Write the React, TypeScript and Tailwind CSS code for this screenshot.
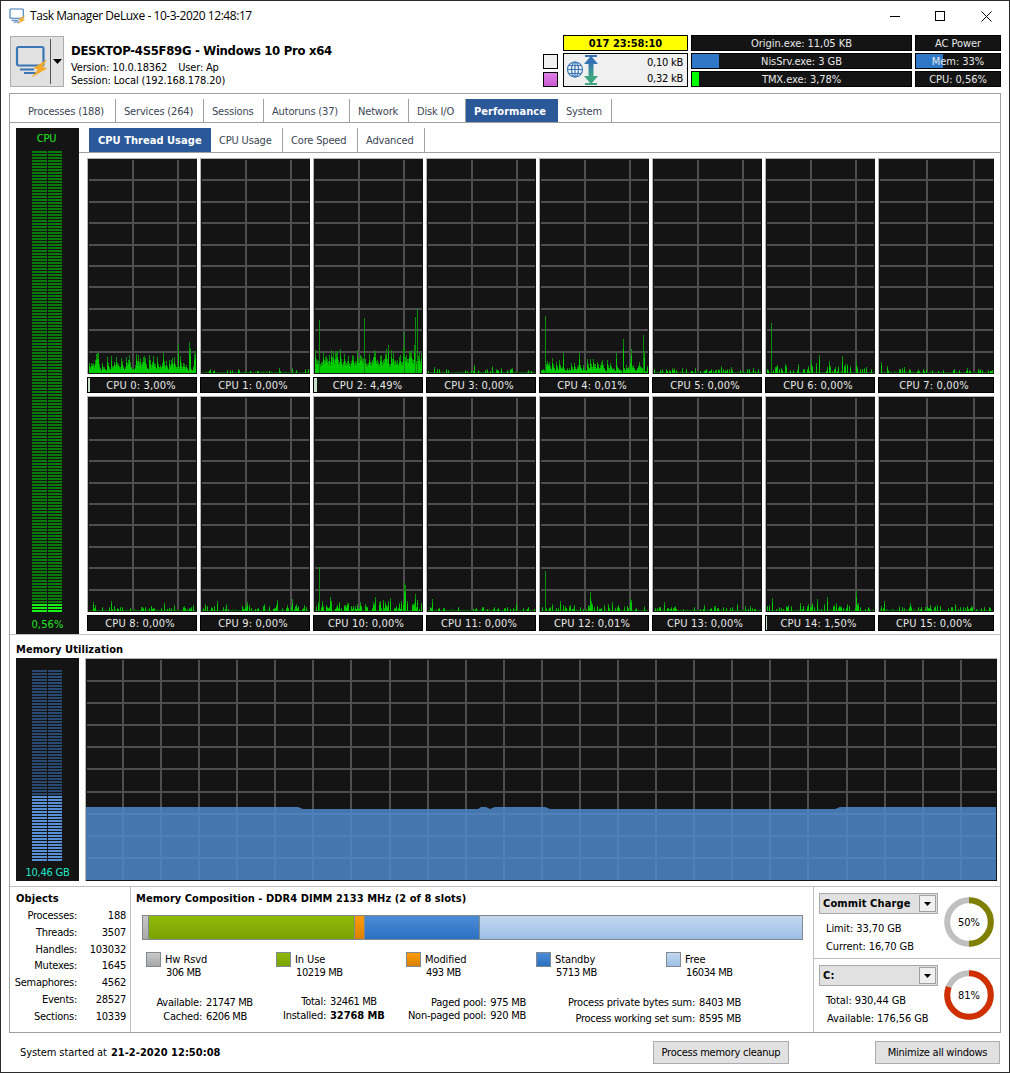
import React from 'react';

interface Tab {
  label: string;
  width: string;
  active?: boolean;
}

interface Thread {
  value: string;
  base: number;
  noise: number;
  density: number;
  spikes: [number, number][];
  marker?: string;
}

const mainTabs: Tab[] = [
  { label: 'Processes (188)', width: 'w-[106px] pl-[18px]' },
  { label: 'Services (264)', width: 'w-[88px] pl-2' },
  { label: 'Sessions', width: 'w-[60px] pl-2' },
  { label: 'Autoruns (37)', width: 'w-[86px] pl-2' },
  { label: 'Network', width: 'w-[59px] pl-2' },
  { label: 'Disk I/O', width: 'w-[57px] pl-2' },
  { label: 'Performance', width: 'w-[92px] pl-2', active: true },
  { label: 'System', width: 'w-[54px] pl-2' },
];

const subTabs: Tab[] = [
  { label: 'CPU Thread Usage', width: 'w-[122px] pl-[9px]', active: true },
  { label: 'CPU Usage', width: 'w-[72px] pl-2' },
  { label: 'Core Speed', width: 'w-[75px] pl-2' },
  { label: 'Advanced', width: 'w-[67px] pl-2' },
];

const threads: Thread[] = [
  { value: '3,00%', base: 2, noise: 17, density: 0.95, spikes: [[89, 29], [100, 31], [101, 25], [9, 20], [22, 17], [60, 18], [106, 22]], marker: 'w-[2px]' },
  { value: '0,00%', base: 0, noise: 3, density: 0.6, spikes: [[77, 5], [90, 5]] },
  { value: '4,49%', base: 8, noise: 15, density: 1, spikes: [[4, 53], [49, 55], [73, 28], [89, 40], [88, 25], [100, 56], [102, 64], [99, 28]], marker: 'w-[3px]' },
  { value: '0,00%', base: 0, noise: 4, density: 0.6, spikes: [[6, 6], [46, 8], [64, 7]] },
  { value: '0,01%', base: 1, noise: 13, density: 0.88, spikes: [[4, 57], [22, 20], [38, 20], [75, 20], [82, 34], [90, 24], [102, 38], [103, 22]] },
  { value: '0,00%', base: 0, noise: 4, density: 0.6, spikes: [[67, 7], [20, 5], [77, 6]] },
  { value: '0,00%', base: 0, noise: 9, density: 0.62, spikes: [[4, 50], [44, 13], [52, 18], [75, 17], [62, 12], [89, 12]] },
  { value: '0,00%', base: 0, noise: 4, density: 0.6, spikes: [[1, 11], [7, 7], [24, 6]] },
  { value: '0,00%', base: 0, noise: 5, density: 0.6, spikes: [[4, 9], [22, 10], [75, 8], [85, 6]] },
  { value: '0,00%', base: 0, noise: 6, density: 0.7, spikes: [[15, 10], [45, 9], [75, 11], [90, 12]] },
  { value: '0,00%', base: 0, noise: 10, density: 0.82, spikes: [[4, 44], [15, 14], [60, 14], [75, 13], [89, 28], [90, 26], [100, 17]] },
  { value: '0,00%', base: 0, noise: 3, density: 0.7, spikes: [[4, 12], [88, 8]] },
  { value: '0,01%', base: 0, noise: 6, density: 0.5, spikes: [[4, 40], [19, 10], [49, 19], [50, 10], [71, 9], [89, 13], [90, 11]] },
  { value: '0,00%', base: 0, noise: 4, density: 0.6, spikes: [[10, 9], [50, 6], [83, 7]] },
  { value: '1,50%', base: 0, noise: 8, density: 0.65, spikes: [[5, 13], [50, 12], [60, 14], [89, 20]], marker: 'w-px' },
  { value: '0,00%', base: 0, noise: 5, density: 0.6, spikes: [[4, 10], [30, 8], [75, 7]] },
];

const objects = [
  ['Processes:', '188'],
  ['Threads:', '3507'],
  ['Handles:', '103032'],
  ['Mutexes:', '1645'],
  ['Semaphores:', '4562'],
  ['Events:', '28527'],
  ['Sections:', '10339'],
];

const composition = [
  { name: 'Hw Rsvd', size: '306 MB', width: 'w-[6px]', fill: 'bg-linear-to-b from-[#c8c8c8] to-[#a8a8a8]' },
  { name: 'In Use', size: '10219 MB', width: 'w-[206px]', fill: 'bg-linear-to-b from-[#8eba08] to-[#7ba205]' },
  { name: 'Modified', size: '493 MB', width: 'w-[10px]', fill: 'bg-linear-to-b from-[#ff9c0c] to-[#d98200]' },
  { name: 'Standby', size: '5713 MB', width: 'w-[115px]', fill: 'bg-linear-to-b from-[#4c8cd6] to-[#2a70c2]' },
  { name: 'Free', size: '16034 MB', width: 'w-[322px]', fill: 'bg-linear-to-b from-[#c3d8f0] to-[#9dbfe6]' },
];

// Small deterministic generator so the history looks the same on every render
const random = (seed: number) => {
  let s = seed * 7919 + 13;
  return () => {
    s = (s * 16807) % 2147483647;
    return s / 2147483647;
  };
};

const history = (t: Thread, seed: number, count: number) => {
  const next = random(seed + 3);
  const values = Array.from({ length: count }, () => {
    const hit = next();
    const r = next();
    if (hit > t.density) return 1;
    return 1 + t.base + r * r * t.noise;
  });
  // busy threads read as a filled area, so soften the gaps between samples
  if (t.base > 0) {
    for (let i = 1; i < count; i++) {
      values[i] = Math.max(values[i], values[i - 1] * 0.6);
    }
  }
  t.spikes.forEach(([x, h]) => {
    values[x] = h;
  });
  return values;
};

const AppIcon: React.FC<{ className: string }> = ({ className }) => (
  <svg className={className} viewBox="0 0 32 32" fill="none">
    <rect x="2" y="2" width="26.500" height="18.500" rx="1.5" stroke="#3b76b5" strokeWidth="2.200" />
    <path d="M5 24.500h14M9 28h12" stroke="#3b76b5" strokeWidth="2" />
    <path d="M31 15.500L19 23l4.500 1.500-6 7L31.500 23.500 27 22z" fill="#f2a92c" stroke="#f2a92c" strokeWidth=".8" />
  </svg>
);

const TabItem: React.FC<{ tab: Tab }> = ({ tab }) => (
  <div
    className={`${tab.width} flex shrink-0 items-center pt-[3px] whitespace-nowrap ${
      tab.active
        ? 'bg-[#2a5898] text-white font-bold tracking-[0.04px]'
        : 'text-[#3c4654] border-r border-[#a0a0a0] tracking-[-0.17px]'
    }`}
  >
    {tab.label}
  </div>
);

const Meter: React.FC<{ total: number; lit: number; color: string; litColor: string }> = ({ total, lit, color, litColor }) => (
  <div className="flex flex-col gap-px mr-[2px]">
    {Array.from({ length: total }, (_, i) => {
      const fill = i >= total - lit ? litColor : color;
      return (
        <div key={i} className="flex gap-px h-[2px] shrink-0">
          <div className={`w-[15px] ${fill}`} />
          <div className={`w-[14px] ${fill}`} />
        </div>
      );
    })}
  </div>
);

const ThreadGraph: React.FC<{ thread: Thread; index: number }> = ({ thread, index }) => {
  const last = index % 8 === 7;
  const width = last ? 116 : 110;
  const lines = last ? [48, 95] : [45, 90];
  return (
    <div className={`${last ? 'w-[116px]' : 'w-[110px]'} flex flex-col gap-[3px]`}>
      <div className="h-[216px] bg-[#141414] border-t border-l border-[#b4b4b4]">
        <svg className="block" width={width - 1} height="215" shapeRendering="crispEdges">
          {lines.map((x) => (
            <rect key={x} x={x - 1} y="1" width="2" height="213" fill="#4e4e4e" />
          ))}
          {[20, 42, 63, 85, 106, 127, 149, 170, 192].map((y) => (
            <rect key={y} x="1" y={y} width={width - 3} height="2" fill="#4e4e4e" />
          ))}
          {history(thread, index, width - 3).map((h, i) => (
            <g key={i}>
              <rect x={i + 1} y={214 - h} width="1" height={h} fill={h < 2 ? '#0b5a0b' : '#0b8f0b'} />
              {h > 2 && <rect x={i + 1} y={214 - h * 0.7} width="1" height={h * 0.7} fill={h > 35 ? '#0c8a0c' : '#00cc00'} />}
            </g>
          ))}
        </svg>
      </div>
      <div className="h-4 bg-[#141414] border border-black text-[#e8e8e8] flex items-start leading-4 tracking-[0.17px]">
        <div className={`h-3.5 ${thread.marker ?? 'w-0'} bg-[#c8e0c8]`} />
        <span className="flex-1 text-center pr-1">
          CPU {index}: {thread.value}
        </span>
      </div>
    </div>
  );
};

const MemoryGrid: React.FC<{ fill: string; clipPath?: string }> = ({ fill, clipPath }) => (
  <g fill={fill} clipPath={clipPath} shapeRendering="crispEdges">
    {Array.from({ length: 23 }, (_, i) => (
      <rect key={`v${i}`} x={Math.round(36 + i * 38.08)} y="1" width="2" height="220" />
    ))}
    {Array.from({ length: 9 }, (_, i) => (
      <rect key={`h${i}`} x="1" y={Math.round(21 + i * 22.1)} width="909" height="2" />
    ))}
  </g>
);

const usedMemory = 'M0 148H212L217 150H392L395 148H400L404 150L409 148H459L464 150H749L754 148H910V221H0Z';

const MemoryGraph: React.FC = () => (
  <div className="w-[912px] h-[223px] bg-[#141414] border-t border-l border-[#b4b4b4]">
    <svg className="block" width="911" height="222">
      <clipPath id="used">
        <path d={usedMemory} />
      </clipPath>
      <MemoryGrid fill="#4e4e4e" />
      <path d={usedMemory} fill="#4676ae" />
      <MemoryGrid fill="#5080ba" clipPath="url(#used)" />
    </svg>
  </div>
);

const StatBar: React.FC<{ label: string; fill?: string }> = ({ label, fill }) => (
  <div className="relative h-4 bg-[#141414] border border-black text-[#e8e8e8] flex items-start justify-center leading-4 tracking-[-0.05px]">
    {fill && <div className={`absolute left-0 top-0 h-3.5 ${fill}`} />}
    <span className="relative">{label}</span>
  </div>
);

const Combo: React.FC<{ label: string }> = ({ label }) => (
  <div className="w-[119px] h-[21px] bg-[#e1e1e1] border border-[#a8a8a8] flex items-center justify-between pl-[3px] pr-px font-bold tracking-[0.12px]">
    <span className="pt-0.5">{label}</span>
    <div className="w-[17px] h-[17px] bg-[#f0f0f0] border border-[#a0a0a0] flex items-center justify-center">
      <svg width="7" height="4" viewBox="0 0 7 4">
        <path d="M0 0h7L3.500 4z" fill="#000" />
      </svg>
    </div>
  </div>
);

const Ring: React.FC<{ percent: number; color: string }> = ({ percent, color }) => (
  <div className="relative w-[50px] h-[50px]">
    <svg width="50" height="50" viewBox="0 0 50 50" fill="none" strokeWidth="6">
      <circle cx="25" cy="25" r="21.800" stroke="#c0c0c0" />
      <circle cx="25" cy="25" r="21.800" stroke={color} pathLength="100" strokeDasharray={`${percent} 100`} transform="rotate(-90 25 25)" />
    </svg>
    <span className="absolute inset-0 flex items-center justify-center pt-[3px] tracking-normal">{percent}%</span>
  </div>
);

const Stat: React.FC<{ label: string; value: string; className: string }> = ({ label, value, className }) => (
  <div className={`${className} flex gap-1 whitespace-nowrap`}>
    <span className="flex-1 text-right">{label}</span>
    <span>{value}</span>
  </div>
);

const TitleBar: React.FC = () => (
  <div className="h-[30px] flex items-center pl-2">
    <AppIcon className="w-4 h-4" />
    <span className="pl-[5px] flex-1 font-['Open_Sans','Noto_Sans',sans-serif] text-[12px] tracking-[-0.45px]">
      Task Manager DeLuxe - 10-3-2020 12:48:17
    </span>
    <svg className="mr-[17px]" width="102" height="11" fill="none" stroke="#000" shapeRendering="crispEdges">
      <path d="M0 5.500h10M45.500.5h9v9h-9z" />
      <path d="M91.500.5l10 10M101.500.5l-10 10" shapeRendering="auto" />
    </svg>
  </div>
);

const Header: React.FC = () => (
  <div className="h-[62px] flex items-start pl-[9px] pr-2 pt-1">
    <div className="w-[54px] h-[51px] mt-px bg-[#e1e1e1] border border-[#adadad] flex items-center">
      <AppIcon className="w-8 h-8 ml-1 mb-0.5" />
      <div className="w-px h-[45px] ml-[3px] bg-[#555]" />
      <svg className="ml-0.5" width="9" height="5">
        <path d="M0 0h9L4.500 5z" fill="#000" />
      </svg>
    </div>
    <div className="flex-1 pl-[7px] whitespace-pre tracking-[-0.17px]">
      <div className="h-[17px] mt-[7px] leading-[17px] text-[13px] font-bold tracking-[-0.31px]">DESKTOP-4S5F89G - Windows 10 Pro x64</div>
      <div className="h-[13px] mt-0.5 leading-[13px] flex gap-[11px]">
        <span>Version: 10.0.18362</span>
        <span>User: Ap</span>
      </div>
      <div className="h-[13px] leading-[13px]">Session: Local (192.168.178.20)</div>
    </div>
    <div className="flex flex-col gap-[3px] pt-[19px] mr-[5px]">
      <div className="w-[15px] h-[15px] border border-black bg-[#f0f0f0]" />
      <div className="w-[15px] h-[15px] border border-black bg-linear-to-b from-[#e080e6] to-[#c85ad0]" />
    </div>
    <div className="w-[125px] flex flex-col gap-0.5 mr-[3px]">
      <div className="h-4 leading-4 bg-[#ffff00] border border-black text-center font-bold tracking-[0.02px]">017 23:58:10</div>
      <div className="h-[34px] bg-[#f0f0f0] border border-black flex items-center pl-[3px] pr-1">
        <svg width="32" height="32" fill="none">
          <defs>
            <linearGradient id="traffic" x1="0" y1="0" x2="0" y2="32" gradientUnits="userSpaceOnUse">
              <stop offset=".25" stopColor="#3472b4" />
              <stop offset=".7" stopColor="#3fa684" />
            </linearGradient>
          </defs>
          <g stroke="#3b78b8" strokeWidth="1.200">
            <circle cx="8" cy="15.500" r="7.500" />
            <ellipse cx="8" cy="15.500" rx="3.500" ry="7.500" />
            <path d="M8 8v15M.5 15.500h15M2 11.500h12M2 19.500h12" />
          </g>
          <path d="M18 1h12v2h-5l6 7h-4.500v12H31l-6 7h5v2H18v-2h5l-6-7h4.500V10H17l6-7h-5z" fill="url(#traffic)" />
        </svg>
        <div className="flex-1 flex flex-col gap-0.5 pt-px text-right leading-[14px]">
          <span>0,10 kB</span>
          <span>0,32 kB</span>
        </div>
      </div>
    </div>
    <div className="w-[221px] flex flex-col gap-0.5 mr-[3px]">
      <StatBar label="Origin.exe: 11,05 KB" />
      <StatBar label="NisSrv.exe: 3 GB" fill="w-[27px] bg-[#2f78c8]" />
      <StatBar label="TMX.exe: 3,78%" fill="w-[7px] bg-[#00ff00]" />
    </div>
    <div className="w-[86px] flex flex-col gap-0.5">
      <StatBar label="AC Power" />
      <StatBar label="Mem: 33%" fill="w-[27px] bg-[#2f78c8]" />
      <StatBar label="CPU: 0,56%" />
    </div>
  </div>
);

const Performance: React.FC = () => (
  <div className="h-[512px] flex pl-[6px] border-b border-[#c0c0c0]">
    <div className="w-[63px] h-[506px] mt-[5px] bg-[#141414] flex flex-col items-center text-[#20e820]">
      <span className="h-[23px] shrink-0 leading-[21px] pr-0.5">CPU</span>
      <Meter total={154} lit={3} color="bg-[#0a7a0a]" litColor="bg-[#18f018]" />
      <span className="leading-[25px] tracking-[0.15px]">0,56%</span>
    </div>
    <div className="flex-1">
      <div className="h-[30px] pt-[5px] pl-[10px] flex border-b border-[#a0a0a0]">
        {subTabs.map((tab) => (
          <TabItem key={tab.label} tab={tab} />
        ))}
      </div>
      <div className="pt-[5px] pl-2 flex flex-wrap gap-[3px]">
        {threads.map((thread, i) => (
          <ThreadGraph key={i} thread={thread} index={i} />
        ))}
      </div>
    </div>
  </div>
);

const MemoryComposition: React.FC = () => (
  <div className="w-[683px] border-r border-[#c0c0c0] pl-[5px]">
    <div className="h-[22px] leading-6 font-bold tracking-[0.05px]">Memory Composition - DDR4 DIMM 2133 MHz (2 of 8 slots)</div>
    <div className="flex w-[661px] h-[25px] mt-[6px] ml-[6px] border border-[#808890]">
      {composition.map((part) => (
        <div key={part.name} className={`${part.width} ${part.fill} border-r border-[#808890] last:border-r-0`} />
      ))}
    </div>
    <div className="flex pl-[10px] mt-3 h-[43px]">
      {composition.map((part) => (
        <div key={part.name} className="w-[130px] flex gap-1">
          <div className={`w-[15px] h-[15px] border border-[#808890] ${part.fill}`} />
          <div className="leading-[13px] pt-px">
            <div className="tracking-[-0.1px]">{part.name}</div>
            <div className="pl-px tracking-[-0.4px]">{part.size}</div>
          </div>
        </div>
      ))}
    </div>
    <div className="flex leading-[14px]">
      <div className="w-[126px] pt-px">
        <div className="flex"><span className="w-[66px] text-right">Available:</span><span className="pl-1 tracking-[-0.4px]">21747 MB</span></div>
        <div className="flex"><span className="w-[66px] text-right">Cached:</span><span className="pl-1 tracking-[-0.4px]">6206 MB</span></div>
      </div>
      <div className="w-[129px]">
        <div className="flex"><span className="w-[64px] text-right">Total:</span><span className="pl-1 tracking-[-0.4px]">32461 MB</span></div>
        <div className="flex"><span className="w-[64px] text-right">Installed:</span><span className="pl-1 font-bold tracking-[-0.05px]">32768 MB</span></div>
      </div>
      <div className="w-[136px] pt-px leading-[13px]">
        <Stat className="w-[135px]" label="Paged pool:" value="975 MB" />
        <Stat className="w-[135px]" label="Non-paged pool:" value="920 MB" />
      </div>
      <div className="w-[214px] leading-4">
        <Stat className="w-[214px]" label="Process private bytes sum:" value="8403 MB" />
        <Stat className="w-[214px]" label="Process working set sum:" value="8595 MB" />
      </div>
    </div>
  </div>
);

const Details: React.FC = () => (
  <div className="mt-[5px] h-[146px] flex border-t border-[#c0c0c0]">
    <div className="w-[121px] border-r border-[#c0c0c0]">
      <div className="h-[21px] leading-6 pl-[6px] font-bold tracking-[0.1px]">Objects</div>
      {objects.map(([label, value]) => (
        <div key={label} className="flex h-[16.8px] leading-[16px]">
          <span className="w-[67px] flex justify-end">{label}</span>
          <span className="w-[49px] text-right">{value}</span>
        </div>
      ))}
    </div>
    <MemoryComposition />
    <div className="flex-1">
      <div className="h-[72px] flex pl-[5px] pt-[6px] border-b border-[#c0c0c0]">
        <div className="w-[125px] tracking-[-0.1px]">
          <Combo label="Commit Charge" />
          <div className="pl-[7px] pt-[6px] leading-[18px]">
            <div>Limit: 33,70 GB</div>
            <div>Current: 16,70 GB</div>
          </div>
        </div>
        <div className="pt-1">
          <Ring percent={50} color="#808000" />
        </div>
      </div>
      <div className="flex pl-[5px] pt-[6px]">
        <div className="w-[125px] tracking-[-0.1px]">
          <Combo label="C:" />
          <div className="pl-[7px] pt-[6px] leading-[18px]">
            <div>Total: 930,44 GB</div>
            <div className="pl-px">Available: 176,56 GB</div>
          </div>
        </div>
        <div className="pt-[5px]">
          <Ring percent={81} color="#d03000" />
        </div>
      </div>
    </div>
  </div>
);

const App: React.FC = () => {
  return (
    <div className="w-[1010px] h-[1073px] overflow-hidden bg-white border border-[#2b2b2b] text-black font-['DejaVu_Sans_Condensed','DejaVu_Sans',sans-serif] text-[11px] tracking-[-0.25px]">
      <TitleBar />
      <Header />
      <div className="ml-2 w-[992px] h-[940px] border border-[#a0a0a0]">
        <div className="h-[29px] pt-[5px] flex border-b border-[#a0a0a0]">
          {mainTabs.map((tab) => (
            <TabItem key={tab.label} tab={tab} />
          ))}
        </div>
        <Performance />
        <div className="h-[23px] leading-[30px] pl-[6px] font-bold tracking-[0.08px]">Memory Utilization</div>
        <div className="h-[223px] flex gap-[6px] pl-[6px]">
          <div className="w-[63px] bg-[#141414] flex flex-col items-center pt-3 text-[#20e8c8]">
            <Meter total={64} lit={22} color="bg-[#284870]" litColor="bg-[#5890d8]" />
            <span className="leading-[23px]">10,46 GB</span>
          </div>
          <MemoryGraph />
        </div>
        <Details />
      </div>
      <div className="h-[39px] flex items-center pl-[19px] pr-[9px]">
        <span className="flex-1 pt-px tracking-[-0.1px]">
          System started at <b className="pl-px tracking-[0.03px]">21-2-2020 12:50:08</b>
        </span>
        <button className="w-[136px] h-[23px] pt-0.5 bg-[#e1e1e1] border border-[#adadad] mr-[86px]">Process memory cleanup</button>
        <button className="w-[125px] h-[23px] pt-0.5 bg-[#e1e1e1] border border-[#adadad]">Minimize all windows</button>
      </div>
    </div>
  );
};

export default App;
